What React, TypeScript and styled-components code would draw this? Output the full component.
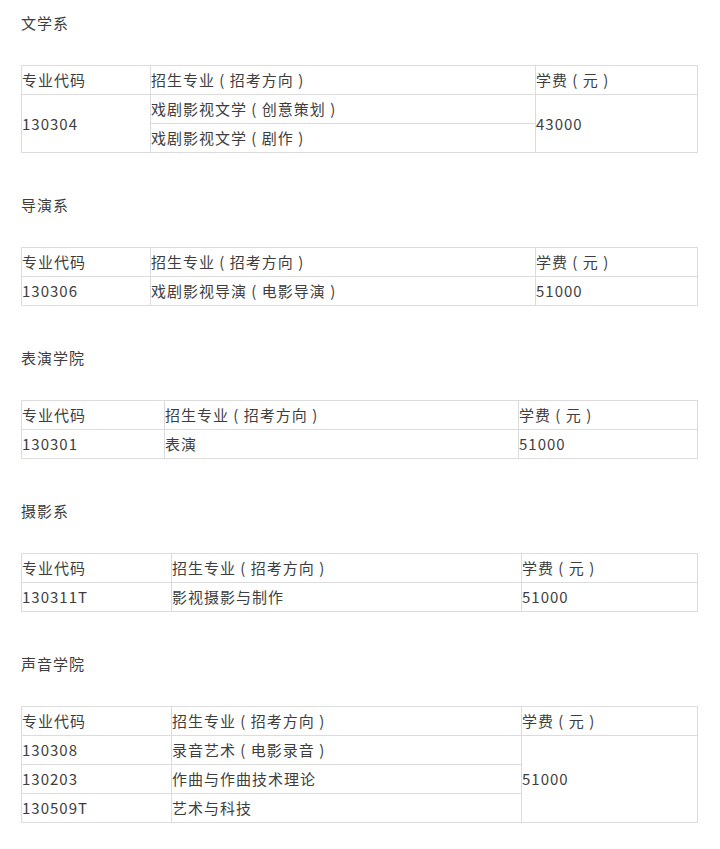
import styled, { createGlobalStyle } from "styled-components";

type Row = { code?: string; major: string; fee?: string; codeSpan?: number; feeSpan?: number };
type Dept = { name: string; cols: [number, number, number]; rows: Row[] };

const depts: Dept[] = [
  {
    name: "文学系",
    cols: [129, 385, 162],
    rows: [
      { code: "130304", codeSpan: 2, major: "戏剧影视文学 ( 创意策划 )", fee: "43000", feeSpan: 2 },
      { major: "戏剧影视文学 ( 剧作 )" },
    ],
  },
  {
    name: "导演系",
    cols: [129, 385, 162],
    rows: [{ code: "130306", major: "戏剧影视导演 ( 电影导演 )", fee: "51000" }],
  },
  {
    name: "表演学院",
    cols: [143, 354, 179],
    rows: [{ code: "130301", major: "表演", fee: "51000" }],
  },
  {
    name: "摄影系",
    cols: [150, 350, 176],
    rows: [{ code: "130311T", major: "影视摄影与制作", fee: "51000" }],
  },
  {
    name: "声音学院",
    cols: [150, 350, 176],
    rows: [
      { code: "130308", major: "录音艺术 ( 电影录音 )", fee: "51000", feeSpan: 3 },
      { code: "130203", major: "作曲与作曲技术理论" },
      { code: "130509T", major: "艺术与科技" },
    ],
  },
];

const GlobalStyle = createGlobalStyle`
  body {
    margin: 0;
    background: #ffffff;
    font-family: "Noto Sans CJK SC", "Noto Sans", sans-serif;
    color: #3e3e3e;
  }
`;

const Page = styled.div`
  padding: 11px 21px 20px 21px;
  width: 677px;
`;

const Section = styled.section`
  margin-bottom: 40px;
`;

const Heading = styled.p`
  margin: 0 0 30px 0;
  font-size: 15px;
  line-height: 24px;
  letter-spacing: 1px;
`;

const Table = styled.table`
  width: 677px;
  border-collapse: collapse;
  table-layout: fixed;
  font-size: 15px;
  letter-spacing: 1px;
`;

const Cell = styled.td`
  border: 1px solid #dcdcdc;
  padding: 0;
  height: 28px;
  line-height: 28px;
  vertical-align: middle;
  white-space: nowrap;
`;

function DeptTable({ dept }: { dept: Dept }) {
  return (
    <Section>
      <Heading>{dept.name}</Heading>
      <Table>
        <colgroup>
          {dept.cols.map((w, i) => (
            <col key={i} style={{ width: w }} />
          ))}
        </colgroup>
        <tbody>
          <tr>
            <Cell>专业代码</Cell>
            <Cell>招生专业 ( 招考方向 )</Cell>
            <Cell>学费 ( 元 )</Cell>
          </tr>
          {dept.rows.map((r, i) => (
            <tr key={i}>
              {r.code && <Cell rowSpan={r.codeSpan}>{r.code}</Cell>}
              <Cell>{r.major}</Cell>
              {r.fee && <Cell rowSpan={r.feeSpan}>{r.fee}</Cell>}
            </tr>
          ))}
        </tbody>
      </Table>
    </Section>
  );
}

export default function App() {
  return (
    <>
      <GlobalStyle />
      <Page>
        {depts.map((d) => (
          <DeptTable key={d.name} dept={d} />
        ))}
      </Page>
    </>
  );
}
